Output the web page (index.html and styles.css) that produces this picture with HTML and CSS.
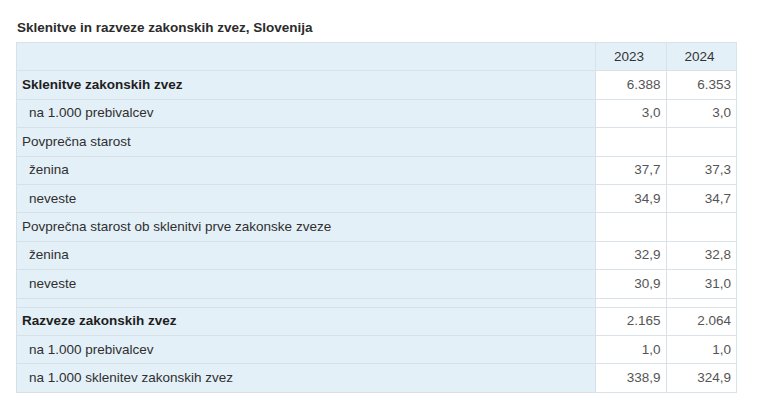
FILE: index.html
```html
<!DOCTYPE html>
<html>
<head>
<meta charset="utf-8">
<link rel="stylesheet" href="styles.css">
</head>
<body>
<div class="wrap">
  <div class="title">Sklenitve in razveze zakonskih zvez, Slovenija</div>
  <table class="data">
    <thead>
      <tr><th class="lbl"></th><th class="yr">2023</th><th class="yr">2024</th></tr>
    </thead>
    <tbody>
      <tr><td class="lbl bold">Sklenitve zakonskih zvez</td><td class="v">6.388</td><td class="v">6.353</td></tr>
      <tr><td class="lbl ind">na 1.000 prebivalcev</td><td class="v">3,0</td><td class="v">3,0</td></tr>
      <tr><td class="lbl">Povprečna starost</td><td class="v"></td><td class="v"></td></tr>
      <tr><td class="lbl ind">ženina</td><td class="v">37,7</td><td class="v">37,3</td></tr>
      <tr><td class="lbl ind">neveste</td><td class="v">34,9</td><td class="v">34,7</td></tr>
      <tr><td class="lbl">Povprečna starost ob sklenitvi prve zakonske zveze</td><td class="v"></td><td class="v"></td></tr>
      <tr><td class="lbl ind">ženina</td><td class="v">32,9</td><td class="v">32,8</td></tr>
      <tr><td class="lbl ind">neveste</td><td class="v">30,9</td><td class="v">31,0</td></tr>
      <tr class="spacer"><td class="lbl"></td><td class="v"></td><td class="v"></td></tr>
      <tr><td class="lbl bold">Razveze zakonskih zvez</td><td class="v">2.165</td><td class="v">2.064</td></tr>
      <tr><td class="lbl ind">na 1.000 prebivalcev</td><td class="v">1,0</td><td class="v">1,0</td></tr>
      <tr><td class="lbl ind">na 1.000 sklenitev zakonskih zvez</td><td class="v">338,9</td><td class="v">324,9</td></tr>
    </tbody>
  </table>
</div>
</body>
</html>
```
FILE: styles.css
```css
html, body {
  margin: 0;
  padding: 0;
  background: #ffffff;
}
body {
  font-family: "Liberation Sans", Arial, sans-serif;
  color: #333333;
}
.wrap {
  padding: 20px 0 0 16px;
}
.title {
  font-size: 13.5px;
  font-weight: bold;
  line-height: 16px;
  margin: 0 0 6px 1px;
  color: #2b2b2b;
}
.data {
  border-collapse: collapse;
  width: 721px;
  font-size: 13.5px;
  table-layout: fixed;
}
.data th, .data td {
  border: 1px solid #d9e2e8;
  height: 28.4px;
  padding: 0;
  box-sizing: border-box;
  line-height: 16px;
}
.data th.lbl, .data td.lbl {
  width: 579px;
  background: #e4f0f8;
  text-align: left;
  padding-left: 5px;
  color: #2f2f2f;
}
.data td.lbl {
  border-color: #d7e0e6;
}
.data th.yr {
  background: #e4f0f8;
  font-weight: normal;
  text-align: left;
  padding-left: 18px;
  color: #333333;
}
.data td.v {
  background: #ffffff;
  text-align: right;
  padding-right: 5px;
  color: #555555;
}
.data td.bold {
  font-weight: bold;
  color: #1e1e1e;
}
.data td.ind {
  padding-left: 12px;
}
.data tr.spacer td {
  height: 9px;
}
```
